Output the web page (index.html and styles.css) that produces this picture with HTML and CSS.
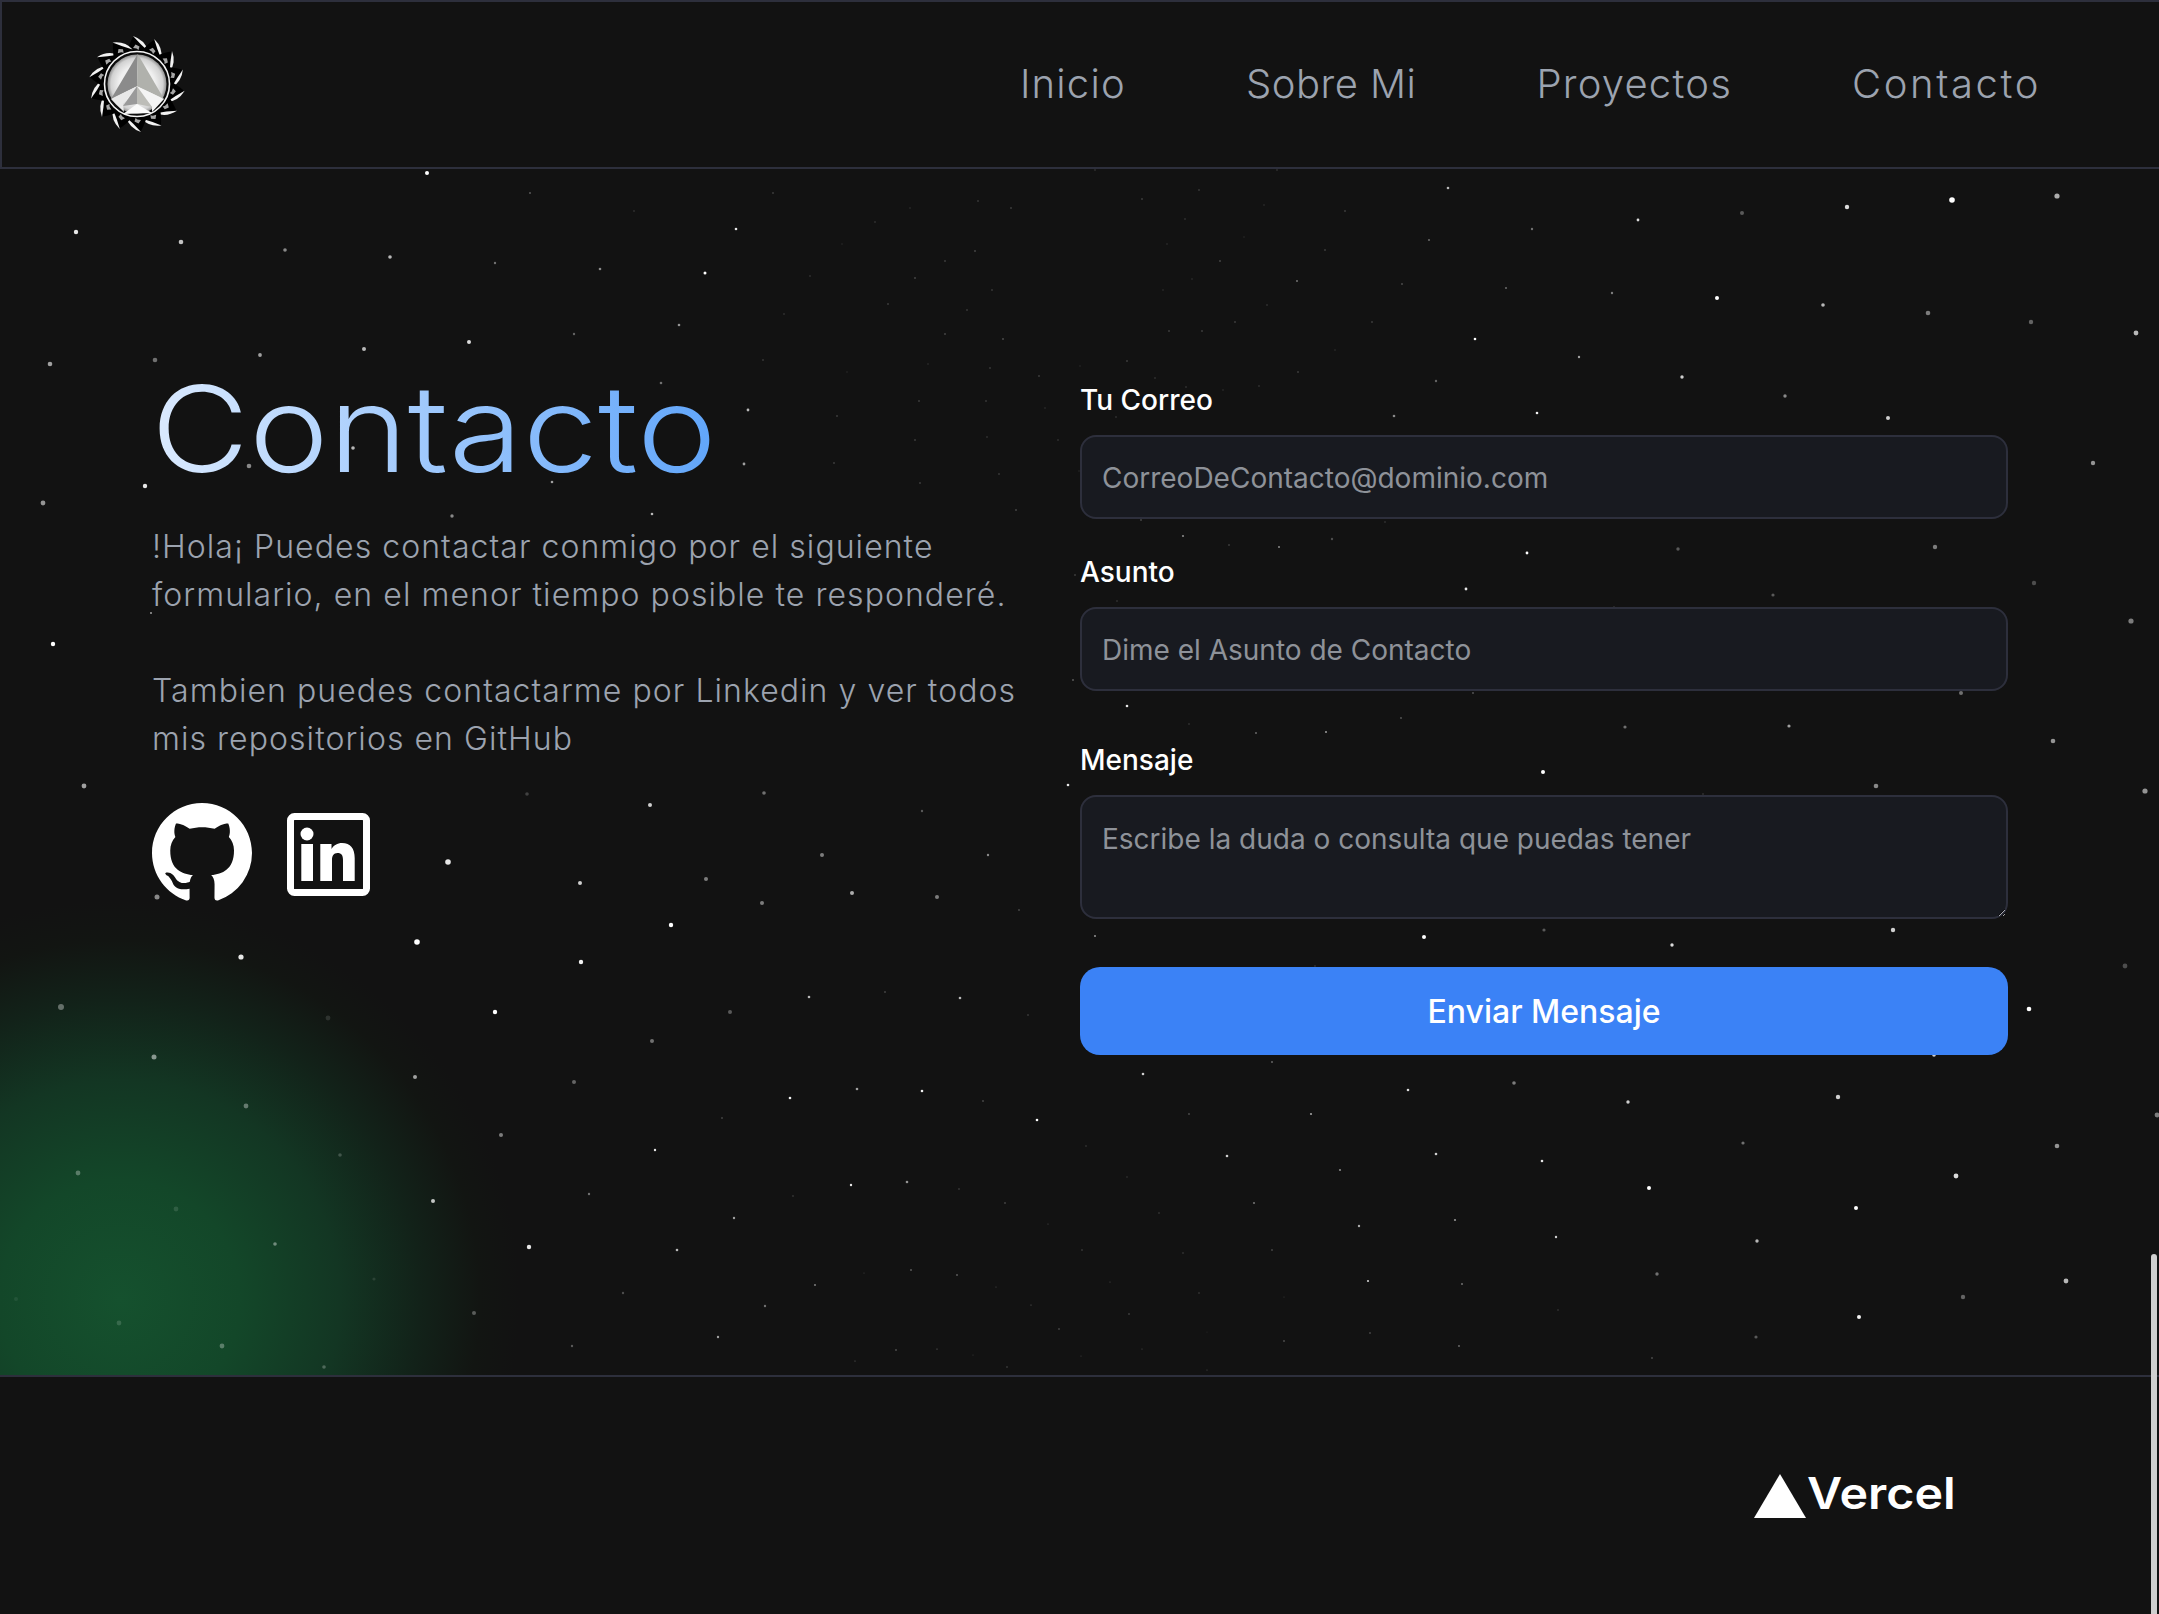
FILE: index.html
```html
<!DOCTYPE html>
<html lang="es">
<head>
<meta charset="utf-8">
<title>Contacto</title>
<link rel="stylesheet" href="styles.css">
</head>
<body>
<header class="site-header">
  <a class="logo" href="#" aria-label="Inicio">
    <svg viewBox="0 0 96 96" width="96" height="96">
      <defs>
        <g id="petal">
          <path d="M-11-29Q-8-40-4-47Q7-43 11-29Z" fill="#000"/>
          <path d="M-4-48Q8-44 11-33Q3-40-4-48Z" fill="#f2f2f2"/>
          <path d="M-4-36l2.500-3.500 4 2-1 3.500-2-1.500z" fill="#a5a5a5"/>
        </g>
        <radialGradient id="disc"><stop offset=".6" stop-color="#f0f0f0"/><stop offset=".88" stop-color="#d2d2d2"/><stop offset="1" stop-color="#8f8f8f"/></radialGradient>
      </defs>
      <g transform="translate(48 48)">
        <use href="#petal"/><use href="#petal" transform="rotate(25.700)"/><use href="#petal" transform="rotate(51.400)"/><use href="#petal" transform="rotate(77.100)"/><use href="#petal" transform="rotate(102.900)"/><use href="#petal" transform="rotate(128.600)"/><use href="#petal" transform="rotate(154.300)"/><use href="#petal" transform="rotate(180)"/><use href="#petal" transform="rotate(205.700)"/><use href="#petal" transform="rotate(231.400)"/><use href="#petal" transform="rotate(257.100)"/><use href="#petal" transform="rotate(282.900)"/><use href="#petal" transform="rotate(308.600)"/><use href="#petal" transform="rotate(334.300)"/>
        <circle r="32.500" fill="#0c0c0c" stroke="#f4f4f4" stroke-width="1.600"/>
        <circle r="29.500" fill="url(#disc)"/>
        <path d="M.7-30-26 15 0 2.300Z" fill="#8b8b8b"/>
        <path d="M.7-30 27 15 0 2.300Z" fill="#b0b1ac"/>
        <path d="M-26 15 0 2.300-14 20-13 28Z" fill="#e8e8e8"/>
        <path d="M27 15 0 2.300 15 23 15 28Z" fill="#f4f4f4"/>
        <path d="M0 2.300-14 22 0 20Z" fill="#9a9a9a"/>
        <path d="M0 2.300 15 23 0 20Z" fill="#bdbdb8"/>
        <path d="M-14 30 0 20 15 29Z" fill="#fafafa"/>
      </g>
    </svg>
  </a>
  <nav class="site-nav">
    <a href="#">Inicio</a>
    <a class="nav-tight" href="#">Sobre Mi</a>
    <a href="#">Proyectos</a>
    <a class="nav-wide" href="#">Contacto</a>
  </nav>
</header>

<main class="contact">
  <svg class="stars" viewBox="0 0 2159 1614" width="2159" height="1614" fill="#fff" aria-hidden="true">
    <circle cx="427" cy="173" r="2" opacity="1"/><circle cx="76" cy="232" r="2.200" opacity=".9"/><circle cx="181" cy="242" r="2.300" opacity=".75"/><circle cx="285" cy="250" r="1.800" opacity=".5"/><circle cx="390" cy="257" r="1.800" opacity=".7"/><circle cx="495" cy="263" r="1.200" opacity=".4"/><circle cx="600" cy="269" r="1.300" opacity=".5"/><circle cx="705" cy="273" r="1.500" opacity="1"/><circle cx="736" cy="229" r="1.300" opacity=".9"/><circle cx="530" cy="193" r="1" opacity=".3"/><circle cx="634" cy="211" r=".8" opacity=".2"/><circle cx="773" cy="193" r=".8" opacity=".3"/><circle cx="978" cy="201" r=".8" opacity=".25"/><circle cx="1011" cy="208" r=".8" opacity=".3"/><circle cx="910" cy="208" r=".8" opacity=".15"/><circle cx="875" cy="222" r=".8" opacity=".2"/><circle cx="975" cy="251" r=".8" opacity=".35"/><circle cx="945" cy="261" r=".8" opacity=".3"/><circle cx="915" cy="278" r=".8" opacity=".35"/><circle cx="810" cy="276" r=".8" opacity=".2"/><circle cx="842" cy="244" r=".8" opacity=".1"/><circle cx="992" cy="290" r=".8" opacity=".25"/><circle cx="888" cy="304" r=".8" opacity=".3"/><circle cx="967" cy="310" r=".8" opacity=".25"/><circle cx="784" cy="314" r=".8" opacity=".2"/><circle cx="945" cy="334" r=".8" opacity=".35"/><circle cx="1003" cy="339" r=".8" opacity=".4"/><circle cx="679" cy="325" r="1.300" opacity=".55"/><circle cx="574" cy="334" r="1.200" opacity=".35"/><circle cx="469" cy="342" r="2" opacity=".85"/><circle cx="364" cy="349" r="2" opacity=".7"/><circle cx="260" cy="355" r="1.900" opacity=".6"/><circle cx="155" cy="360" r="2.300" opacity=".4"/><circle cx="50" cy="364" r="2.300" opacity=".6"/><circle cx="763" cy="360" r=".8" opacity=".25"/><circle cx="928" cy="364" r=".8" opacity=".15"/><circle cx="990" cy="368" r=".8" opacity=".25"/><circle cx="1039" cy="376" r=".8" opacity=".3"/><circle cx="661" cy="383" r="1.300" opacity=".4"/><circle cx="847" cy="372" r=".8" opacity=".1"/><circle cx="748" cy="410" r="1.400" opacity=".7"/><circle cx="919" cy="401" r=".8" opacity=".3"/><circle cx="986" cy="401" r=".8" opacity=".25"/><circle cx="837" cy="416" r=".8" opacity=".3"/><circle cx="1045" cy="408" r=".8" opacity=".15"/><circle cx="915" cy="440" r=".8" opacity=".3"/><circle cx="987" cy="437" r=".8" opacity=".2"/><circle cx="1058" cy="440" r=".8" opacity=".2"/><circle cx="834" cy="463" r=".8" opacity=".3"/><circle cx="744" cy="464" r="1.400" opacity=".6"/><circle cx="999" cy="474" r=".8" opacity=".25"/><circle cx="353" cy="448" r="1.800" opacity=".7"/><circle cx="249" cy="466" r="2.300" opacity=".5"/><circle cx="145" cy="486" r="2.200" opacity=".9"/><circle cx="552" cy="482" r="1.300" opacity=".6"/><circle cx="920" cy="483" r=".8" opacity=".3"/><circle cx="43" cy="503" r="2.400" opacity=".55"/><circle cx="452" cy="516" r="1.700" opacity=".5"/><circle cx="652" cy="514" r="1.300" opacity=".7"/><circle cx="1016" cy="510" r=".8" opacity=".35"/><circle cx="151" cy="613" r="1" opacity=".6"/><circle cx="53" cy="644" r="2.200" opacity="1"/><circle cx="84" cy="786" r="2.400" opacity=".6"/><circle cx="157" cy="897" r="2.500" opacity=".5"/>
    <circle cx="527" cy="794" r="1.800" opacity=".2"/><circle cx="650" cy="805" r="2" opacity=".8"/><circle cx="764" cy="793" r="1.800" opacity=".4"/><circle cx="922" cy="811" r="1.200" opacity=".3"/><circle cx="1068" cy="785" r="1.300" opacity=".9"/><circle cx="448" cy="862" r="2.800" opacity=".9"/><circle cx="580" cy="883" r="2" opacity=".8"/><circle cx="706" cy="879" r="2" opacity=".45"/><circle cx="822" cy="855" r="2" opacity=".45"/><circle cx="988" cy="855" r="1.200" opacity=".5"/><circle cx="762" cy="903" r="2" opacity=".45"/><circle cx="852" cy="893" r="2" opacity=".65"/><circle cx="937" cy="897" r="2" opacity=".45"/><circle cx="1019" cy="910" r="1.100" opacity=".2"/><circle cx="417" cy="942" r="2.800" opacity="1"/><circle cx="671" cy="925" r="2.200" opacity="1"/><circle cx="581" cy="962" r="2.200" opacity=".95"/><circle cx="495" cy="1012" r="2.200" opacity="1"/><circle cx="730" cy="1012" r="2" opacity=".3"/><circle cx="809" cy="997" r="1.300" opacity=".7"/><circle cx="885" cy="992" r="1" opacity=".2"/><circle cx="960" cy="998" r="1.300" opacity=".7"/><circle cx="1028" cy="1015" r="1" opacity=".15"/><circle cx="652" cy="1041" r="2" opacity=".4"/><circle cx="415" cy="1077" r="2" opacity=".6"/><circle cx="574" cy="1082" r="2" opacity=".35"/><circle cx="790" cy="1098" r="1.300" opacity=".95"/><circle cx="857" cy="1089" r="1.300" opacity=".6"/><circle cx="922" cy="1091" r="1.300" opacity=".95"/><circle cx="983" cy="1101" r="1.100" opacity=".2"/><circle cx="1037" cy="1120" r="1.300" opacity="1"/><circle cx="722" cy="1118" r="1" opacity=".2"/><circle cx="501" cy="1135" r="2" opacity=".45"/><circle cx="655" cy="1150" r="1.200" opacity=".9"/><circle cx="589" cy="1194" r="1.200" opacity=".4"/><circle cx="433" cy="1201" r="2" opacity=".75"/><circle cx="793" cy="1196" r=".9" opacity=".15"/><circle cx="851" cy="1185" r="1.200" opacity=".9"/><circle cx="907" cy="1182" r="1.300" opacity=".55"/><circle cx="959" cy="1189" r=".7" opacity=".3"/><circle cx="1005" cy="1203" r=".7" opacity=".4"/><circle cx="1048" cy="1224" r=".6" opacity=".25"/><circle cx="734" cy="1218" r="1.200" opacity=".6"/><circle cx="529" cy="1247" r="2.200" opacity=".9"/><circle cx="677" cy="1250" r="1.300" opacity=".7"/><circle cx="864" cy="1273" r=".6" opacity=".2"/><circle cx="911" cy="1270" r=".8" opacity=".5"/><circle cx="957" cy="1275" r=".8" opacity=".5"/><circle cx="996" cy="1287" r=".6" opacity=".25"/><circle cx="815" cy="1285" r=".9" opacity=".5"/><circle cx="623" cy="1293" r="1.200" opacity=".25"/><circle cx="1031" cy="1305" r=".6" opacity=".35"/><circle cx="765" cy="1306" r="1.200" opacity=".4"/><circle cx="474" cy="1313" r="2" opacity=".3"/><circle cx="1059" cy="1329" r=".7" opacity=".4"/><circle cx="718" cy="1337" r="1.200" opacity=".6"/><circle cx="572" cy="1346" r="1.200" opacity=".3"/><circle cx="896" cy="1350" r=".7" opacity=".5"/><circle cx="937" cy="1349" r=".6" opacity=".4"/><circle cx="855" cy="1361" r=".6" opacity=".35"/><circle cx="973" cy="1355" r=".5" opacity=".2"/><circle cx="1007" cy="1367" r=".7" opacity=".3"/>
    <circle cx="61" cy="1007" r="3" opacity=".35"/><circle cx="154" cy="1057" r="2.500" opacity=".5"/><circle cx="241" cy="957" r="2.600" opacity=".9"/><circle cx="328" cy="1018" r="2.400" opacity=".12"/><circle cx="246" cy="1106" r="2.400" opacity=".35"/><circle cx="78" cy="1173" r="2.400" opacity=".3"/><circle cx="340" cy="1155" r="1.800" opacity=".2"/><circle cx="176" cy="1209" r="2.400" opacity=".12"/><circle cx="275" cy="1244" r="1.800" opacity=".4"/><circle cx="374" cy="1279" r="1.600" opacity=".1"/><circle cx="16" cy="1299" r="2" opacity=".07"/><circle cx="119" cy="1323" r="2.400" opacity=".15"/><circle cx="222" cy="1346" r="2.400" opacity=".3"/><circle cx="324" cy="1367" r="1.800" opacity=".25"/>
    <circle cx="1095" cy="170" r=".8" opacity=".2"/><circle cx="1277" cy="170" r=".8" opacity=".2"/><circle cx="1448" cy="188" r="1.300" opacity=".7"/><circle cx="1952" cy="200" r="2.800" opacity="1"/><circle cx="2057" cy="196" r="2.600" opacity=".65"/><circle cx="1847" cy="207" r="2.200" opacity=".85"/><circle cx="1742" cy="213" r="2" opacity=".3"/><circle cx="1638" cy="220" r="1.400" opacity=".85"/><circle cx="1532" cy="229" r="1.200" opacity=".4"/><circle cx="1429" cy="240" r="1.100" opacity=".35"/><circle cx="1199" cy="190" r=".8" opacity=".25"/><circle cx="1142" cy="199" r=".8" opacity=".3"/><circle cx="1264" cy="205" r=".8" opacity=".15"/><circle cx="1345" cy="211" r=".8" opacity=".3"/><circle cx="1185" cy="219" r=".8" opacity=".2"/><circle cx="1244" cy="237" r=".8" opacity=".1"/><circle cx="1167" cy="244" r=".8" opacity=".15"/><circle cx="1325" cy="250" r=".8" opacity=".3"/><circle cx="1220" cy="261" r=".8" opacity=".35"/><circle cx="1297" cy="281" r=".9" opacity=".45"/><circle cx="1192" cy="279" r=".8" opacity=".15"/><circle cx="1402" cy="284" r=".8" opacity=".4"/><circle cx="1506" cy="288" r="1.100" opacity=".35"/><circle cx="1612" cy="293" r="1.200" opacity=".45"/><circle cx="1717" cy="298" r="2" opacity="1"/><circle cx="1823" cy="305" r="1.800" opacity=".7"/><circle cx="1928" cy="313" r="2.300" opacity=".45"/><circle cx="2031" cy="322" r="2.200" opacity=".35"/><circle cx="2136" cy="333" r="2.400" opacity=".7"/><circle cx="1163" cy="290" r=".8" opacity=".15"/><circle cx="1267" cy="305" r=".8" opacity=".2"/><circle cx="1235" cy="322" r=".8" opacity=".3"/><circle cx="1372" cy="322" r=".8" opacity=".3"/><circle cx="1169" cy="331" r=".8" opacity=".3"/><circle cx="1202" cy="331" r=".8" opacity=".3"/><circle cx="1475" cy="339" r="1.300" opacity="1"/><circle cx="1579" cy="357" r="1.200" opacity=".6"/><circle cx="1335" cy="350" r=".8" opacity=".15"/><circle cx="1127" cy="361" r=".8" opacity=".3"/><circle cx="1080" cy="366" r=".8" opacity=".1"/><circle cx="1298" cy="372" r=".8" opacity=".3"/><circle cx="1436" cy="381" r="1.200" opacity=".35"/><circle cx="1682" cy="377" r="1.700" opacity=".8"/><circle cx="1785" cy="396" r="1.700" opacity=".5"/><circle cx="1155" cy="378" r=".8" opacity=".2"/><circle cx="1186" cy="387" r=".8" opacity=".2"/><circle cx="1259" cy="386" r=".8" opacity=".2"/><circle cx="1223" cy="390" r=".8" opacity=".15"/><circle cx="1537" cy="413" r="1.300" opacity=".95"/><circle cx="1394" cy="416" r="1.300" opacity=".5"/><circle cx="1888" cy="418" r="2" opacity=".8"/><circle cx="1116" cy="417" r=".8" opacity=".2"/><circle cx="2093" cy="463" r="2.200" opacity=".55"/><circle cx="1079" cy="471" r=".8" opacity=".1"/><circle cx="1141" cy="520" r=".8" opacity=".35"/><circle cx="1385" cy="522" r=".8" opacity=".2"/><circle cx="1183" cy="536" r="1.100" opacity=".5"/><circle cx="1229" cy="545" r=".8" opacity=".3"/><circle cx="1279" cy="547" r="1" opacity=".5"/><circle cx="1332" cy="539" r="1.200" opacity=".25"/><circle cx="1527" cy="553" r="1.400" opacity="1"/><circle cx="1678" cy="549" r="1.700" opacity=".3"/><circle cx="1935" cy="547" r="2.200" opacity=".45"/><circle cx="2034" cy="583" r="2.200" opacity=".25"/><circle cx="1466" cy="589" r="1.400" opacity=".9"/><circle cx="1773" cy="595" r="1.600" opacity=".3"/><circle cx="1075" cy="575" r=".8" opacity=".3"/><circle cx="1117" cy="601" r=".8" opacity=".2"/><circle cx="1614" cy="607" r=".8" opacity=".2"/><circle cx="2131" cy="621" r="2.600" opacity=".45"/><circle cx="1073" cy="680" r="1" opacity=".3"/><circle cx="1961" cy="693" r="2" opacity=".4"/><circle cx="1473" cy="693" r=".9" opacity=".3"/><circle cx="1127" cy="706" r="1.300" opacity=".9"/><circle cx="1401" cy="718" r=".9" opacity=".3"/><circle cx="1189" cy="724" r=".8" opacity=".2"/><circle cx="1625" cy="727" r="1.600" opacity=".4"/><circle cx="1789" cy="726" r="1.600" opacity=".6"/>
    <circle cx="1256" cy="733" r=".9" opacity=".4"/><circle cx="1326" cy="732" r="1" opacity=".6"/><circle cx="2053" cy="741" r="2.300" opacity=".55"/><circle cx="1543" cy="772" r="2" opacity="1"/><circle cx="1876" cy="786" r="2.300" opacity=".5"/><circle cx="2145" cy="791" r="2.600" opacity=".55"/><circle cx="1703" cy="794" r=".8" opacity=".2"/><circle cx="1095" cy="936" r="1" opacity=".55"/><circle cx="1424" cy="937" r="2" opacity="1"/><circle cx="1544" cy="930" r="1.600" opacity=".3"/><circle cx="1672" cy="945" r="1.700" opacity=".85"/><circle cx="1893" cy="930" r="2.200" opacity=".8"/><circle cx="2125" cy="966" r="2.400" opacity=".25"/><circle cx="1315" cy="966" r=".8" opacity=".2"/><circle cx="2029" cy="1009" r="2.300" opacity="1"/><circle cx="1934" cy="1055" r="1.800" opacity=".8"/><circle cx="1272" cy="1062" r="1" opacity=".35"/><circle cx="1143" cy="1074" r="1.300" opacity=".8"/><circle cx="1514" cy="1083" r="1.800" opacity=".45"/><circle cx="1408" cy="1090" r="1.300" opacity=".85"/><circle cx="1628" cy="1102" r="1.700" opacity=".8"/><circle cx="1838" cy="1097" r="2.200" opacity=".8"/><circle cx="2157" cy="1115" r="2.400" opacity=".45"/><circle cx="1189" cy="1114" r=".9" opacity=".25"/><circle cx="1311" cy="1114" r="1.100" opacity=".6"/><circle cx="1086" cy="1146" r=".8" opacity=".2"/><circle cx="1743" cy="1143" r="1.600" opacity=".4"/><circle cx="2057" cy="1146" r="2.300" opacity=".55"/><circle cx="1227" cy="1156" r="1.300" opacity=".8"/><circle cx="1436" cy="1154" r="1.300" opacity=".8"/><circle cx="1542" cy="1161" r="1.300" opacity=".9"/><circle cx="1340" cy="1170" r="1.100" opacity=".5"/><circle cx="1127" cy="1177" r=".7" opacity=".2"/><circle cx="1956" cy="1176" r="2.400" opacity=".85"/><circle cx="1649" cy="1188" r="2" opacity="1"/><circle cx="1856" cy="1208" r="2" opacity="1"/><circle cx="1254" cy="1203" r="1.100" opacity=".4"/><circle cx="1159" cy="1213" r=".7" opacity=".25"/><circle cx="1359" cy="1226" r="1.200" opacity=".65"/><circle cx="1455" cy="1220" r="1.100" opacity=".55"/><circle cx="1556" cy="1237" r="1.200" opacity=".8"/><circle cx="1757" cy="1241" r="1.700" opacity=".7"/><circle cx="1082" cy="1250" r=".7" opacity=".3"/><circle cx="1183" cy="1253" r=".7" opacity=".25"/><circle cx="1272" cy="1250" r=".8" opacity=".35"/><circle cx="1657" cy="1274" r="1.700" opacity=".4"/><circle cx="1110" cy="1282" r=".6" opacity=".25"/><circle cx="1368" cy="1281" r="1.100" opacity=".8"/><circle cx="1462" cy="1284" r="1" opacity=".4"/><circle cx="2066" cy="1281" r="2.400" opacity=".7"/><circle cx="1199" cy="1293" r=".7" opacity=".25"/><circle cx="1284" cy="1297" r=".5" opacity=".2"/><circle cx="1963" cy="1297" r="2.200" opacity=".35"/><circle cx="1129" cy="1314" r=".8" opacity=".3"/><circle cx="1558" cy="1310" r=".8" opacity=".2"/><circle cx="1859" cy="1317" r="2" opacity=".95"/><circle cx="1370" cy="1333" r=".8" opacity=".35"/><circle cx="1284" cy="1341" r=".8" opacity=".4"/><circle cx="1756" cy="1337" r="1.600" opacity=".3"/><circle cx="1459" cy="1346" r=".9" opacity=".4"/><circle cx="1142" cy="1349" r=".6" opacity=".25"/><circle cx="1207" cy="1332" r=".6" opacity=".1"/><circle cx="1081" cy="1356" r=".6" opacity=".2"/><circle cx="1652" cy="1358" r=".9" opacity=".25"/><circle cx="1207" cy="1370" r=".6" opacity=".25"/>
  </svg>

  <section class="intro">
    <h1 class="title">Contacto</h1>
    <p class="lead">!Hola¡ Puedes contactar conmigo por el siguiente formulario, en el menor tiempo posible te responderé.<br><br>Tambien puedes contactarme por Linkedin y ver todos mis repositorios en GitHub</p>
    <div class="socials">
      <a href="#" aria-label="GitHub">
        <svg class="icon-github" viewBox="0 0 16 16" width="100" height="100" fill="#fff"><path d="M8 0C3.580 0 0 3.580 0 8c0 3.540 2.290 6.530 5.470 7.590.4.070.55-.17.55-.38 0-.19-.01-.82-.01-1.490-2.010.37-2.530-.49-2.690-.94-.09-.23-.48-.94-.82-1.130-.28-.15-.68-.52-.01-.53.630-.01 1.080.58 1.230.82.720 1.210 1.870.870 2.330.66.070-.52.280-.870.510-1.070-1.780-.2-3.640-.89-3.640-3.950 0-.87.310-1.590.820-2.150-.08-.2-.36-1.020.080-2.120 0 0 .67-.21 2.200.82.640-.18 1.320-.27 2-.27s1.360.09 2 .27c1.530-1.040 2.200-.82 2.200-.82.44 1.100.16 1.920.08 2.120.51.56.82 1.270.82 2.150 0 3.070-1.870 3.750-3.650 3.950.29.25.54.73.54 1.480 0 1.070-.01 1.930-.01 2.200 0 .21.15.46.55.38A8.010 8.010 0 0 0 16 8c0-4.420-3.580-8-8-8z"/></svg>
      </a>
      <a class="social-in" href="#" aria-label="Linkedin">
        <svg class="icon-linkedin" viewBox="0 0 83 83" width="83" height="83"><rect x="3.500" y="3.500" width="76" height="76" rx="4" fill="none" stroke="#fff" stroke-width="7"/><circle cx="20" cy="21" r="6.500" fill="#fff"/><path fill="#fff" d="M14.300 31H26V68H14.300zM33.300 31H44.500V36C46.500 32.500 50.500 30 55 30C63.500 30 67.700 35.500 67.700 45V68H56V47C56 42.500 54.500 40 50.500 40C46.500 40 45 43 45 47V68H33.300z"/></svg>
      </a>
    </div>
  </section>

  <form class="form">
    <label class="label" for="correo">Tu Correo</label>
    <input class="field field-gap" id="correo" type="email" placeholder="CorreoDeContacto@dominio.com">
    <label class="label" for="asunto">Asunto</label>
    <input class="field field-gap-lg" id="asunto" type="text" placeholder="Dime el Asunto de Contacto">
    <label class="label" for="mensaje">Mensaje</label>
    <textarea class="field field-area" id="mensaje" placeholder="Escribe la duda o consulta que puedas tener"></textarea>
    <button class="send" type="button">Enviar Mensaje</button>
  </form>
</main>

<footer class="site-footer">
  <div class="vercel">
    <svg viewBox="0 0 52 44" width="52" height="44" fill="#fff"><path d="M26 0 52 44H0Z"/></svg>
    <span class="vercel-name">Vercel</span>
  </div>
</footer>
<div class="scroll-thumb"></div>
</body>
</html>
```

FILE: styles.css
```css
* { box-sizing: border-box; }

html, body {
  margin: 0;
  height: 1614px;
  overflow: hidden;
  background: #121212;
  font-family: Inter, "Liberation Sans", sans-serif;
}

body { position: relative; }

a { text-decoration: none; color: inherit; }

.site-header {
  height: 169px;
  display: flex;
  align-items: center;
  justify-content: space-between;
  padding: 0 118px 2px 87px;
  border: 2px solid #2d2f3c;
  border-right: 0;
}

.logo { display: block; height: 96px; }

.site-nav {
  display: flex;
  gap: 120px;
  font-size: 40px;
  font-weight: 300;
  letter-spacing: 1.200px;
  color: #9ca3af;
}

.nav-tight { letter-spacing: .5px; }
.nav-wide { letter-spacing: 2.600px; }

.contact {
  position: relative;
  height: 1206px;
  padding: 211px 151px 0 152px;
  display: grid;
  grid-template-columns: 878px 928px;
  gap: 50px;
  overflow: hidden;
  background: radial-gradient(circle 400px at 120px 1131px, #15512e 0, #134729 30%, #133623 55%, #122219 75%, #121512 90%, #121212 100%);
}

.stars {
  position: absolute;
  left: 0;
  top: -169px;
}

.intro, .form { position: relative; }

.intro { margin-top: -16px; }

.title {
  margin: 0 0 0 -1px;
  font-size: 120px;
  line-height: 130px;
  font-weight: 300;
  width: max-content;
  transform: scaleX(1.121);
  transform-origin: left center;
  background: linear-gradient(90deg, #dbeafe, #60a5fa);
  -webkit-background-clip: text;
  background-clip: text;
  color: transparent;
}

.lead {
  margin: 29px 0 0;
  font-size: 32px;
  line-height: 48px;
  font-weight: 300;
  letter-spacing: 1.050px;
  color: #9ca3af;
}

.socials {
  display: flex;
  align-items: center;
  gap: 35px;
  margin-top: 40px;
}

.socials a { display: block; }
.socials svg { display: block; }
.social-in { margin-top: 3px; }

.form {
  display: flex;
  flex-direction: column;
}

.label {
  color: #fff;
  font-size: 28px;
  line-height: 40px;
  font-weight: 500;
  margin-bottom: 15px;
}

.field {
  width: 928px;
  height: 84px;
  padding: 2px 20px 0;
  background: #181a20;
  border: 2px solid #2d2f3c;
  border-radius: 16px;
  color: #fff;
  font-family: inherit;
  font-size: 28px;
  outline: none;
}

.field::placeholder { color: #8e9299; opacity: 1; }

.field-gap { margin-bottom: 33px; }
.field-gap-lg { margin-bottom: 49px; }

.field-area {
  height: 124px;
  padding: 22px 20px;
  line-height: 40px;
  display: block;
  margin-bottom: 48px;
}

.send {
  height: 88px;
  border: 0;
  border-radius: 20px;
  background: #3b82f6;
  color: #fff;
  font-family: inherit;
  font-size: 32px;
  font-weight: 500;
}

.site-footer {
  height: 239px;
  border-top: 2px solid #2d2f3c;
  display: flex;
  justify-content: flex-end;
  padding: 97px 205px 0 0;
}

.vercel { display: flex; align-items: flex-end; height: 44px; gap: 1px; }

.vercel-name {
  display: block;
  width: 147px;
  color: #fff;
  font-size: 44px;
  line-height: 44px;
  font-weight: 600;
  transform: translateY(-3px) scaleX(1.1);
  transform-origin: left center;
}

.scroll-thumb {
  position: absolute;
  right: 2px;
  top: 1254px;
  bottom: 0;
  width: 6px;
  border-radius: 3px 3px 0 0;
  background: #cfcfcf;
}
```
